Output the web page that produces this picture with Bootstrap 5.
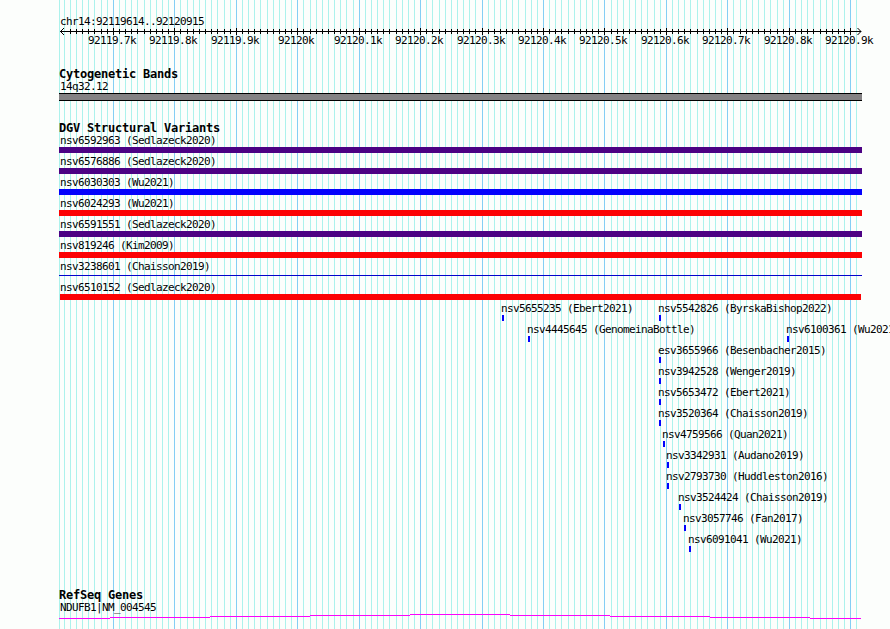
<!DOCTYPE html>
<html lang="en">
<head>
    <meta charset="UTF-8">
    <meta name="viewport" content="width=device-width, initial-scale=1.0">
    <title>chr14:92119614..92120915</title>
    <link href="https://cdn.jsdelivr.net/npm/bootstrap@5.3.0/dist/css/bootstrap.min.css" rel="stylesheet">
    <style>
        body {
            background-color: #fcfefc;
            color: #000;
            font-family: "DejaVu Sans Mono", "Liberation Mono", monospace;
            font-size: 11px;
            line-height: 13px;
            letter-spacing: -0.62px;
        }
        .browser {
            height: 629px;
        }
        svg {
            display: block;
        }
        .panel {
            padding-left: 59px;
            padding-top: 15px;
        }
        .track-title {
            font-size: 12px;
            font-weight: bold;
            line-height: 12px;
            letter-spacing: -0.22px;
            margin: 0;
        }
        .tick-text {
            margin-left: -59px;
        }
        .cytoband {
            width: 803px;
            height: 8px;
            background-color: #848284;
            border-top: 1px solid #000;
            border-bottom: 1px solid #000;
        }
        .lane {
            height: 21px;
        }
        .label-text {
            height: 13px;
            padding-left: 1px;
            white-space: pre;
        }
        .feature {
            height: 6px;
            width: 803px;
        }
        .purple { background-color: #4c0284; }
        .blue { background-color: #0402fc; }
        .red { background-color: #fc0204; }
        .inset { width: 801px; margin-left: 1px; }
        .line {
            height: 1px;
            margin-top: 2px;
            background-color: #0402cc;
        }
        .site {
            width: 2px;
            margin-left: 2px;
            background-color: #0402fc;
        }
        .cyto-track { margin-top: 21px; }
        .dgv-track { margin-top: 21px; }
        .gene-track { margin-top: 35px; }
    </style>
</head>
<body>

    <div class="browser position-relative overflow-hidden">
        <svg id="grid" class="position-absolute top-0 start-0" width="890" height="629" shape-rendering="crispEdges"></svg>

        <div class="panel position-relative">
            <!-- Ruler -->
            <div class="label-text">chr14:92119614..92120915</div>
            <svg id="ruler" class="tick-text" width="890" height="19"></svg>

            <!-- Cytogenetic bands -->
            <section class="cyto-track">
                <h2 class="track-title">Cytogenetic Bands</h2>
                <div class="label-text">14q32.12</div>
                <div class="cytoband"></div>
            </section>

            <!-- Structural variants -->
            <section class="dgv-track">
                <h2 class="track-title">DGV Structural Variants</h2>
                <div id="variants"></div>
            </section>

            <!-- Genes -->
            <section class="gene-track">
                <h2 class="track-title">RefSeq Genes</h2>
                <div class="label-text">NDUFB1|NM_004545</div>
                <svg width="803" height="15" shape-rendering="crispEdges">
                    <path fill="none" stroke="#fc02fc" d="M0 4.5H51M51 3.5H151M151 2.5H251M251 1.5H351M351 .5H451M451 1.5H551M551 2.5H651M651 3.5H751M751 4.5H802"/>
                </svg>
            </section>
        </div>
    </div>

    <script src="https://cdn.jsdelivr.net/npm/bootstrap@5.3.0/dist/js/bootstrap.bundle.min.js"></script>
    <script>
        const LEFT = 59;
        const FIRST_TICK = -8;
        const LAST_TICK = 121;
        const labels = ["92119.7k", "92119.8k", "92119.9k", "92120k", "92120.1k", "92120.2k", "92120.3k",
            "92120.4k", "92120.5k", "92120.6k", "92120.7k", "92120.8k", "92120.9k"];

        // Each lane holds one or more features: [name, start x, style]
        const lanes = [
            [["nsv6592963 (Sedlazeck2020)", 59, "purple"]],
            [["nsv6576886 (Sedlazeck2020)", 59, "purple"]],
            [["nsv6030303 (Wu2021)", 59, "blue"]],
            [["nsv6024293 (Wu2021)", 59, "red"]],
            [["nsv6591551 (Sedlazeck2020)", 59, "purple"]],
            [["nsv819246 (Kim2009)", 59, "red"]],
            [["nsv3238601 (Chaisson2019)", 59, "line"]],
            [["nsv6510152 (Sedlazeck2020)", 59, "red inset"]],
            [["nsv5655235 (Ebert2021)", 502, "site"], ["nsv5542826 (ByrskaBishop2022)", 659, "site"]],
            [["nsv4445645 (GenomeinaBottle)", 528, "site"], ["nsv6100361 (Wu2021)", 787, "site"]],
            [["esv3655966 (Besenbacher2015)", 659, "site"]],
            [["nsv3942528 (Wenger2019)", 659, "site"]],
            [["nsv5653472 (Ebert2021)", 659, "site"]],
            [["nsv3520364 (Chaisson2019)", 659, "site"]],
            [["nsv4759566 (Quan2021)", 663, "site"]],
            [["nsv3342931 (Audano2019)", 667, "site"]],
            [["nsv2793730 (Huddleston2016)", 667, "site"]],
            [["nsv3524424 (Chaisson2019)", 679, "site"]],
            [["nsv3057746 (Fan2017)", 684, "site"]],
            [["nsv6091041 (Wu2021)", 689, "site"]]
        ];

        function tickX(j) {
            return Math.floor(113.41 + j * 6.1444);
        }

        function renderGrid() {
            let lines = '<rect x="59" y="0" width="1" height="629" fill="#acf2ec"/>';
            let ticks = '<path d="M60 3.5H861M64 0L60.5 3.5L64 7M857.5 0L861 3.5L857.5 7" fill="none" stroke="#000"/>';
            for (let j = FIRST_TICK; j <= LAST_TICK; j++) {
                const x = tickX(j);
                const major = j % 10 === 0;
                lines += `<rect x="${x}" y="0" width="1" height="629" fill="${major ? "#84cef4" : "#acf2ec"}"/>`;
                // the arrow heads take the place of the outermost ticks
                if (j > FIRST_TICK && j < LAST_TICK) {
                    ticks += `<rect x="${x}" y="${major ? 0 : 1}" width="1" height="${major ? 7 : 5}"/>`;
                }
                if (major) {
                    const text = labels[j / 10];
                    ticks += `<text x="${x - text.length * 3 - 1}" y="16">${text}</text>`;
                }
            }
            document.getElementById("grid").innerHTML = lines;
            document.getElementById("ruler").innerHTML = ticks;
        }

        function renderVariants() {
            const container = document.getElementById("variants");
            lanes.forEach(features => {
                const lane = document.createElement("div");
                lane.classList.add("lane", "d-grid");
                features.forEach(([name, x, style]) => {
                    const offset = style === "site" ? x - 2 - LEFT : x - LEFT;
                    const item = document.createElement("div");
                    item.style.gridArea = "1 / 1";
                    item.style.marginLeft = `${offset}px`;
                    item.innerHTML = `
                        <div class="label-text">${name}</div>
                        <div class="feature ${style}"></div>
                    `;
                    lane.appendChild(item);
                });
                container.appendChild(lane);
            });
        }

        renderGrid();
        renderVariants();
    </script>
</body>
</html>
